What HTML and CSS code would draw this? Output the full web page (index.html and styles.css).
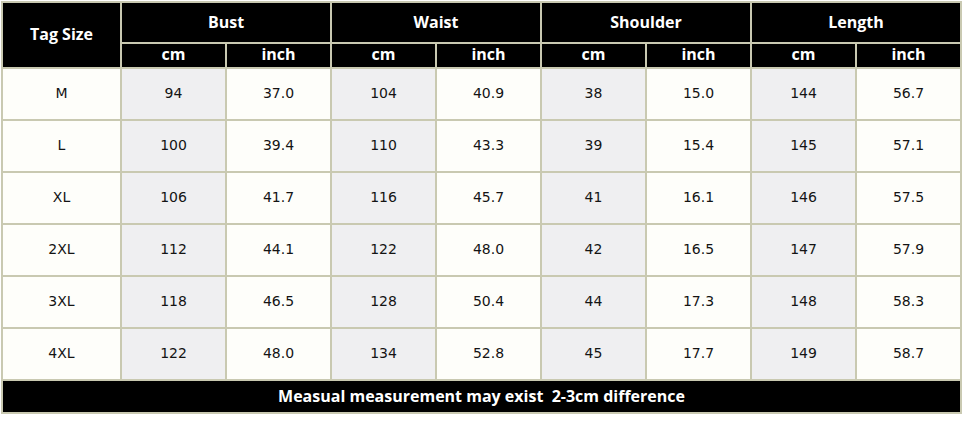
FILE: index.html
```html
<!DOCTYPE html>
<html>
<head>
<meta charset="utf-8">
<link rel="stylesheet" href="styles.css">
</head>
<body>
<div class="chart">
  <div class="h tag">Tag Size</div>
  <div class="h grp">Bust</div>
  <div class="h grp">Waist</div>
  <div class="h grp">Shoulder</div>
  <div class="h grp">Length</div>
  <div class="h unit">cm</div><div class="h unit">inch</div>
  <div class="h unit">cm</div><div class="h unit">inch</div>
  <div class="h unit">cm</div><div class="h unit">inch</div>
  <div class="h unit">cm</div><div class="h unit">inch</div>

  <div class="c w">M</div><div class="c g">94</div><div class="c w">37.0</div><div class="c g">104</div><div class="c w">40.9</div><div class="c g">38</div><div class="c w">15.0</div><div class="c g">144</div><div class="c w">56.7</div>
  <div class="c w">L</div><div class="c g">100</div><div class="c w">39.4</div><div class="c g">110</div><div class="c w">43.3</div><div class="c g">39</div><div class="c w">15.4</div><div class="c g">145</div><div class="c w">57.1</div>
  <div class="c w">XL</div><div class="c g">106</div><div class="c w">41.7</div><div class="c g">116</div><div class="c w">45.7</div><div class="c g">41</div><div class="c w">16.1</div><div class="c g">146</div><div class="c w">57.5</div>
  <div class="c w">2XL</div><div class="c g">112</div><div class="c w">44.1</div><div class="c g">122</div><div class="c w">48.0</div><div class="c g">42</div><div class="c w">16.5</div><div class="c g">147</div><div class="c w">57.9</div>
  <div class="c w">3XL</div><div class="c g">118</div><div class="c w">46.5</div><div class="c g">128</div><div class="c w">50.4</div><div class="c g">44</div><div class="c w">17.3</div><div class="c g">148</div><div class="c w">58.3</div>
  <div class="c w">4XL</div><div class="c g">122</div><div class="c w">48.0</div><div class="c g">134</div><div class="c w">52.8</div><div class="c g">45</div><div class="c w">17.7</div><div class="c g">149</div><div class="c w">58.7</div>

  <div class="h foot">Measual measurement may exist&nbsp; 2-3cm difference</div>
</div>
</body>
</html>
```

FILE: styles.css
```css
html, body {
  margin: 0;
  padding: 0;
  background: #ffffff;
}
.chart {
  margin: 1px 0 0 1px;
  width: max-content;
  display: grid;
  grid-template-columns: 117px repeat(8, 103px);
  grid-template-rows: 39px 23px repeat(6, 50px) 31px;
  gap: 2px;
  padding: 2px;
  background: #c9c9b1;
}
.h {
  background: #000000;
  color: #ffffff;
  font-family: "Open Sans", "DejaVu Sans", sans-serif;
  font-weight: 700;
  font-size: 16px;
  display: flex;
  align-items: center;
  justify-content: center;
}
.tag {
  grid-row: span 2;
  padding-bottom: 3px;
}
.grp {
  grid-column: span 2;
  padding-bottom: 2px;
}
.unit {
  padding-bottom: 3px;
}
.foot {
  grid-column: 1 / -1;
  padding-bottom: 2px;
}
.c {
  font-family: "DejaVu Sans", sans-serif;
  font-size: 14px;
  color: #141414;
  display: flex;
  align-items: center;
  justify-content: center;
  padding-bottom: 2px;
}
.w { background: #fefefa; }
.g { background: #efeff1; }
```
